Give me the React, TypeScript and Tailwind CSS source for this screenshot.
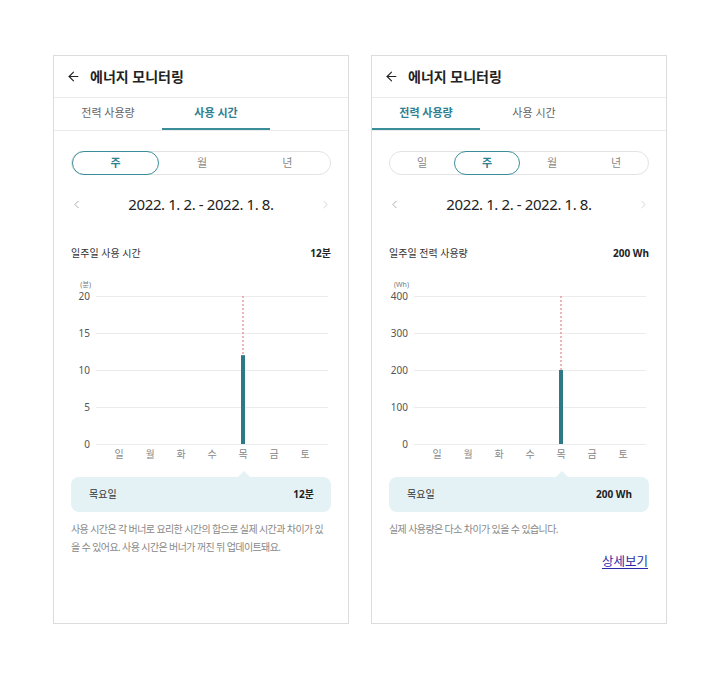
import React from 'react';
import { ArrowLeft, ChevronLeft, ChevronRight } from 'lucide-react';

const DAYS = ['일', '월', '화', '수', '목', '금', '토'];

interface PanelProps {
  activeTab: number;
  periods: string[];
  activePeriod: number;
  summaryLabel: string;
  value: string;
  unit: string;
  ticks: string[];
  ratio: number;
  note: string;
  showDetail?: boolean;
}

const Chart = ({ unit, ticks, ratio }: { unit: string; ticks: string[]; ratio: number }) => {
  const h = 148;
  const barTop = h - h * ratio;
  // bar sits on the 목 column (index 4)
  const barX = 7.5 + 31 * 4 + 15.5;
  return (
    <div className="mt-[21px]">
      <div className="w-[37px] text-right text-[7px] leading-[8px] text-[#777]">({unit})</div>
      <div className="flex mt-[7px]">
        <div className="w-[36px] h-[148px] flex flex-col justify-between items-end">
          {ticks.map(t => (
            <div key={t} className="h-0 flex items-center text-[10px] text-[#555]">{t}</div>
          ))}
        </div>
        <svg width="232" height="149" className="ml-[6px] overflow-visible">
          {[0, 37, 74, 111, 148].map(y => (
            <line key={y} x1="0" x2="232" y1={y + 0.5} y2={y + 0.5} stroke="#ececec" strokeWidth="1" />
          ))}
          <line x1={barX} x2={barX} y1="0" y2={barTop} stroke="#e06b6b" strokeWidth="1" strokeDasharray="2 2" />
          <rect x={barX - 2} y={barTop} width="4" height={h - barTop} fill="#2d7a86" />
        </svg>
      </div>
      <div className="flex pl-[49.5px] mt-[2px]">
        {DAYS.map(d => (
          <div key={d} className="w-[31px] text-center text-[10px] leading-[14px] text-[#888]">{d}</div>
        ))}
      </div>
    </div>
  );
};

const Panel = ({ activeTab, periods, activePeriod, summaryLabel, value, unit, ticks, ratio, note, showDetail }: PanelProps) => {
  return (
    <div className="w-[296px] h-[569px] border border-[#dcdcdc] bg-white flex flex-col">
      {/* Header */}
      <div className="h-[42px] flex items-center pl-[12px] gap-[9px] border-b border-[#ececec]">
        <ArrowLeft size={15} strokeWidth={1.8} className="text-[#222]" />
        <span className="text-[14px] font-bold text-[#222]">에너지 모니터링</span>
      </div>

      {/* Tabs */}
      <div className="h-[33px] flex border-b border-[#ececec]">
        {['전력 사용량', '사용 시간'].map((t, i) => (
          <div
            key={t}
            className={`w-[108px] flex items-center justify-center text-[11px] border-b-2 ${
              i === activeTab ? 'border-[#3a8e9a] text-[#2f8090] font-bold' : 'border-transparent text-[#666]'
            }`}
          >
            {t}
          </div>
        ))}
      </div>

      {/* Period selector */}
      <div className="mx-[17px] mt-[20px] h-[24px] rounded-full border border-[#e3e3e3] flex">
        {periods.map((p, i) => (
          <div
            key={p}
            className={`flex-1 flex items-center justify-center text-[11px] rounded-full ${
              i === activePeriod ? 'border-[1.5px] border-[#3a8e9a] text-[#2f8090] font-bold -my-px' : 'text-[#888]'
            }`}
          >
            {p}
          </div>
        ))}
      </div>

      {/* Date row */}
      <div className="mt-[18px] flex items-center justify-between px-[16px] h-[22px]">
        <ChevronLeft size={13} strokeWidth={1.5} className="text-[#999]" />
        <span className="text-[15px] tracking-[-0.4px] text-[#222]">2022. 1. 2. - 2022. 1. 8.</span>
        <ChevronRight size={13} strokeWidth={1.5} className="text-[#ccc]" />
      </div>

      {/* Summary */}
      <div className="mt-[31px] flex justify-between px-[17px] text-[10px] leading-[14px]">
        <span className="text-[#333]">{summaryLabel}</span>
        <span className="font-bold text-[#222]">{value}</span>
      </div>

      <Chart unit={unit} ticks={ticks} ratio={ratio} />

      {/* Tooltip box */}
      <div className="relative mx-[17px] mt-[16px] h-[35px] rounded-lg bg-[#e4f2f6] flex items-center justify-between pl-[18px] pr-[17px] text-[10px]">
        <div className="absolute left-[167px] -top-[6px] w-0 h-0 border-l-[6px] border-r-[6px] border-b-[6px] border-l-transparent border-r-transparent border-b-[#e4f2f6]" />
        <span className="text-[#333]">목요일</span>
        <span className="font-bold text-[#222]">{value}</span>
      </div>

      <p className="mx-[17px] mt-[8px] text-[10px] leading-[18px] tracking-[-0.6px] text-[#888] break-all">{note}</p>

      {showDetail && (
        <div className="flex justify-end pr-[18px] mt-[15px]">
          <span className="text-[12.5px] text-[#2a2aa8] underline underline-offset-2">상세보기</span>
        </div>
      )}
    </div>
  );
};

export default function App() {
  return (
    <div
      className="w-[720px] h-[681px] bg-white flex justify-center gap-[22px] pt-[55px]"
      style={{ fontFamily: '"Noto Sans", "Noto Sans CJK KR", sans-serif' }}
    >
      <Panel
        activeTab={1}
        periods={['주', '월', '년']}
        activePeriod={0}
        summaryLabel="일주일 사용 시간"
        value="12분"
        unit="분"
        ticks={['20', '15', '10', '5', '0']}
        ratio={12 / 20}
        note="사용 시간은 각 버너로 요리한 시간의 합으로 실제 시간과 차이가 있을 수 있어요. 사용 시간은 버너가 꺼진 뒤 업데이트돼요."
      />
      <Panel
        activeTab={0}
        periods={['일', '주', '월', '년']}
        activePeriod={1}
        summaryLabel="일주일 전력 사용량"
        value="200 Wh"
        unit="Wh"
        ticks={['400', '300', '200', '100', '0']}
        ratio={200 / 400}
        note="실제 사용량은 다소 차이가 있을 수 있습니다."
        showDetail
      />
    </div>
  );
}
